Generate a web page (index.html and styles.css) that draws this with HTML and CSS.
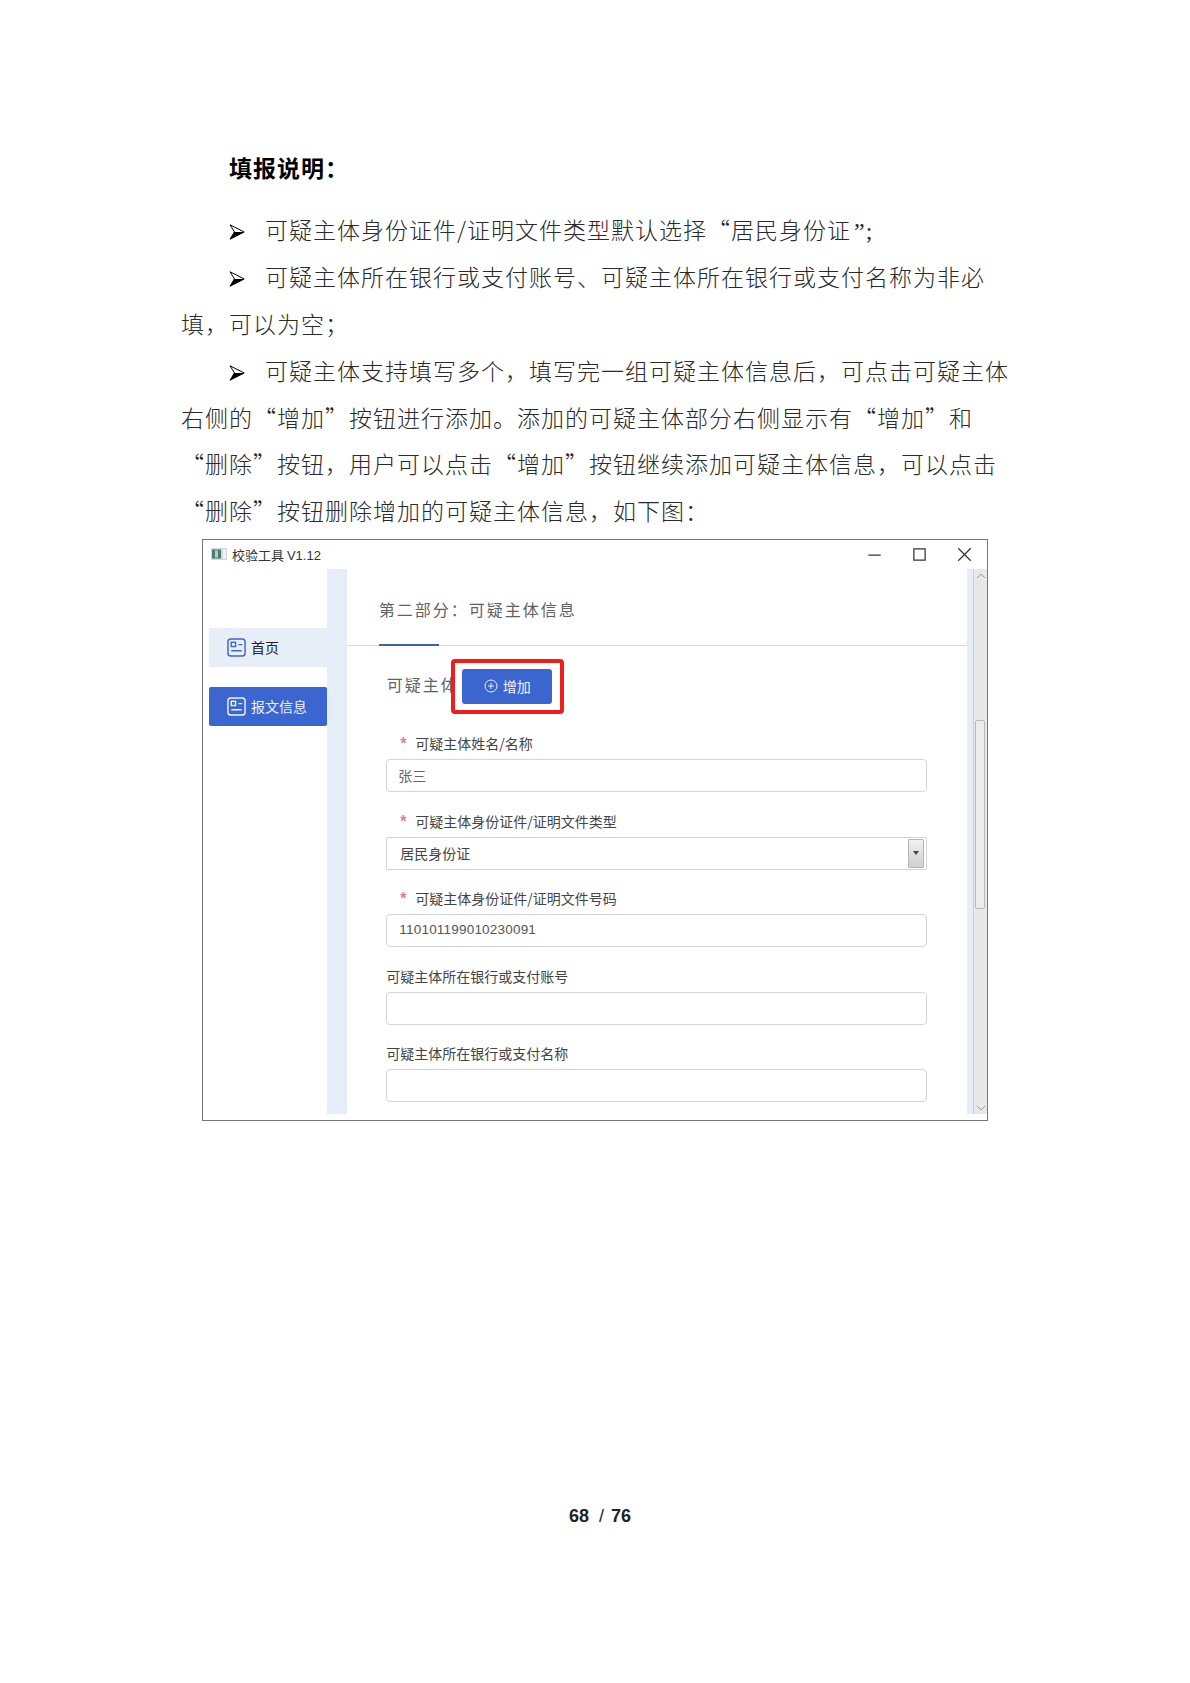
FILE: index.html
```html
<!DOCTYPE html>
<html lang="zh-CN">
<head>
<meta charset="utf-8">
<title>填报说明</title>
<link rel="stylesheet" href="styles.css">
</head>
<body>
<main class="page">
  <h1 class="heading">填报说明&#xFF1A;</h1>
  <p class="line item"><svg class="bullet" viewBox="0 0 16 16"><path class="b-line" d="M1 .8 L15.2 8 L1 15.2 L5.5 8 Z"/><path d="M5 8 H15.2 L1 15.2 Z"/></svg>可疑主体身份证件/证明文件类型默认选择“居民身份证<span class="tail">”;</span></p>
  <p class="line item"><svg class="bullet" viewBox="0 0 16 16"><path class="b-line" d="M1 .8 L15.2 8 L1 15.2 L5.5 8 Z"/><path d="M5 8 H15.2 L1 15.2 Z"/></svg>可疑主体所在银行或支付账号、可疑主体所在银行或支付名称为非必</p>
  <p class="line">填&#xFF0C;可以为空&#xFF1B;</p>
  <p class="line item"><svg class="bullet" viewBox="0 0 16 16"><path class="b-line" d="M1 .8 L15.2 8 L1 15.2 L5.5 8 Z"/><path d="M5 8 H15.2 L1 15.2 Z"/></svg>可疑主体支持填写多个&#xFF0C;填写完一组可疑主体信息后&#xFF0C;可点击可疑主体</p>
  <p class="line">右侧的“增加”按钮进行添加。添加的可疑主体部分右侧显示有“增加”和</p>
  <p class="line">“删除”按钮&#xFF0C;用户可以点击“增加”按钮继续添加可疑主体信息&#xFF0C;可以点击</p>
  <p class="line">“删除”按钮删除增加的可疑主体信息&#xFF0C;如下图&#xFF1A;</p>

  <section class="window">
    <header class="titlebar">
      <svg class="app-icon" viewBox="0 0 16 12"><rect width="16" height="12" fill="#d5d8d8"/><rect x="1" y="1.5" width="9" height="9" fill="#4d7a70"/><rect x="4" y="2.5" width="3" height="7" fill="#b9c9c5"/><rect x="12" y="1.5" width="3" height="9" fill="#f2f2f2"/></svg>
      <span class="app-title">校验工具 <span class="app-ver">V1.12</span></span>
      <div class="controls">
        <svg class="ctl" viewBox="0 0 12 12"><path d="M1 6.5H11"/></svg>
        <svg class="ctl" viewBox="0 0 12 12"><rect x="1.5" y="1.5" width="9" height="9"/></svg>
        <svg class="ctl" viewBox="0 0 12 12"><path d="M1 1L11 11M11 1L1 11"/></svg>
      </div>
    </header>
    <div class="win-body">
      <nav class="sidebar">
        <a class="nav-item nav-home"><svg class="nav-icon" viewBox="0 0 20 20"><rect x="1" y="1" width="18" height="18" rx="3"/><rect x="4.5" y="4.5" width="4.5" height="4.5"/><path d="M12 7H16M4.5 13.5H15.5"/></svg>首页</a>
        <a class="nav-item nav-active"><svg class="nav-icon" viewBox="0 0 20 20"><rect x="1" y="1" width="18" height="18" rx="3"/><rect x="4.5" y="4.5" width="4.5" height="4.5"/><path d="M12 7H16M4.5 13.5H15.5"/></svg>报文信息</a>
      </nav>
      <div class="strip"></div>
      <div class="content">
        <div class="tabs"><span class="tab">第二部分&#xFF1A;可疑主体信息</span></div>
        <div class="section-row">
          <span class="section-name">可疑主体</span>
          <div class="callout">
            <button class="add-btn"><svg class="plus" viewBox="0 0 14 14"><circle cx="7" cy="7" r="6"/><path d="M7 4V10M4 7H10"/></svg>增加</button>
          </div>
        </div>
        <form class="form">
          <div class="field">
            <label class="label req">可疑主体姓名/名称</label>
            <div class="input input-cjk">张三</div>
          </div>
          <div class="field">
            <label class="label req">可疑主体身份证件/证明文件类型</label>
            <div class="input select">居民身份证<span class="select-arrow"></span></div>
          </div>
          <div class="field">
            <label class="label req">可疑主体身份证件/证明文件号码</label>
            <div class="input input-num">110101199010230091</div>
          </div>
          <div class="field">
            <label class="label">可疑主体所在银行或支付账号</label>
            <div class="input"></div>
          </div>
          <div class="field">
            <label class="label">可疑主体所在银行或支付名称</label>
            <div class="input"></div>
          </div>
        </form>
      </div>
      <div class="strip-thin"></div>
      <div class="scrollbar">
        <svg class="sb-arrow" viewBox="0 0 10 6"><path d="M1 5L5 1L9 5"/></svg>
        <div class="thumb"></div>
        <svg class="sb-arrow sb-down" viewBox="0 0 10 6"><path d="M1 1L5 5L9 1"/></svg>
      </div>
    </div>
  </section>

  <footer class="pager"><b>68</b><span class="sep">/</span><b>76</b></footer>
</main>
</body>
</html>
```
FILE: styles.css
```css
* { box-sizing: border-box; }
html, body { margin: 0; padding: 0; background: #fff; }
body { font-family: "Noto Sans CJK SC", "Liberation Sans", sans-serif; color: #222; }
.page { width: 1190px; height: 1683px; padding: 144px 0 0 181px; }
.heading { margin: 0 0 15.7px; padding-left: 48px; font-size: 23px; letter-spacing: 1px; line-height: 46.8px; font-weight: 700; color: #000; }
.line { height: 46.8px; margin: 0; font-size: 23px; letter-spacing: 1px; line-height: 46.8px; white-space: nowrap; font-weight: 300; color: #2a2a2a; }
.item { padding-left: 48px; }
.bullet { display: inline-block; width: 16px; height: 16px; margin-right: 20px; vertical-align: -1px; fill: #000; }
.b-line { fill: #fff; stroke: #000; stroke-width: 1; }
.tail { font-family: "Liberation Serif", serif; font-size: 24px; line-height: 0; letter-spacing: 1px; margin-left: 3px; }

.window { width: 786px; height: 582px; margin: 4.6px 0 0 21px; border: 1.5px solid #777; background: #fff; }
.titlebar { height: 29px; display: flex; align-items: center; padding-left: 8px; }
.app-icon { width: 16px; height: 12px; margin-right: 5px; }
.app-title { font-size: 13px; color: #333; }
.app-ver { font-family: "Liberation Sans", sans-serif; }
.controls { margin-left: auto; display: flex; gap: 30px; padding-right: 15px; }
.ctl { width: 15px; height: 15px; fill: none; stroke: #333; stroke-width: 1; }

.win-body { display: flex; height: 545px; }
.sidebar { width: 124px; padding: 59px 0 0 6px; display: flex; flex-direction: column; gap: 20px; }
.nav-item { height: 39px; display: flex; align-items: center; padding-left: 18px; font-size: 14px; }
.nav-home { background: #e8eef8; color: #222; }
.nav-home .nav-icon { stroke: #3f66c9; }
.nav-active { background: #3c66cf; color: #eef2fb; border-radius: 2px; }
.nav-active .nav-icon { stroke: #eef2fb; }
.nav-icon { width: 19px; height: 19px; margin-right: 5px; fill: none; stroke-width: 1.5; }
.strip { width: 20px; background: #e7edf8; }
.strip-thin { width: 6px; background: #e7edf8; }

.content { width: 621px; }
.tabs { height: 77px; border-bottom: 1px solid #d8d8d8; display: flex; align-items: flex-end; padding-left: 32px; }
.tab { display: block; height: 77px; padding-top: 28px; width: 60px; white-space: nowrap; font-size: 16px; letter-spacing: 2px; line-height: 24px; color: #5f6266; border-bottom: 2px solid #3f5fb5; margin-bottom: -1px; }
.section-row { position: relative; height: 87.5px; padding: 26px 0 0 40px; }
.section-name { font-size: 16px; letter-spacing: 2px; line-height: 24px; color: #606266; }
.callout { position: absolute; left: 104px; top: 13px; width: 113px; height: 55px; background: #fff; border: 4px solid #ee1f1a; border-radius: 4px; display: flex; align-items: center; justify-content: center; }
.add-btn { width: 90px; height: 35px; border: 0; border-radius: 3px; background: #3c66cf; color: #f0f3fb; font: 14px "Noto Sans CJK SC", sans-serif; display: flex; align-items: center; justify-content: center; padding: 0; gap: 5px; }
.plus { width: 14px; height: 14px; fill: none; stroke: #e6ecf9; stroke-width: 1; }

.form { padding-left: 39.5px; display: flex; flex-direction: column; gap: 18.5px; }
.field { width: 541px; }
.label { display: block; height: 20px; margin-bottom: 6px; font-size: 14px; line-height: 20px; color: #444; }
.req { padding-left: 29px; position: relative; }
.req::before { content: "*"; position: absolute; left: 14px; top: 1px; color: #f4768c; font-family: "Liberation Sans", sans-serif; font-size: 16px; font-weight: 700; }
.input { height: 33px; border: 1.5px solid #d4d4d4; border-radius: 4px; font-size: 14px; line-height: 30px; color: #666; padding-left: 11px; background: #fff; }
.input-num { font-family: "Liberation Sans", sans-serif; font-size: 13.5px; letter-spacing: .2px; color: #555; padding-left: 12px; }
.select { position: relative; border-radius: 1px; color: #444; padding-left: 13px; }
.select-arrow { position: absolute; right: 2px; top: 1px; width: 16px; height: 29px; border: 1px solid #b5b5b5; border-radius: 1px; background: linear-gradient(#f1f1f1, #cfcfcf); display: flex; align-items: center; justify-content: center; }
.select-arrow::after { content: ""; border-left: 3.5px solid transparent; border-right: 3.5px solid transparent; border-top: 4px solid #444; }

.scrollbar { width: 14px; background: #e8e8e8; border-left: 1px solid #cfcfcf; display: flex; flex-direction: column; align-items: center; position: relative; }
.sb-arrow { width: 10px; height: 6px; margin-top: 4px; fill: none; stroke: #999; stroke-width: 1; flex: none; }
.sb-down { margin-top: auto; margin-bottom: 3px; }
.thumb { position: absolute; top: 151px; left: 1px; width: 10px; height: 189px; background: #ececec; border: 1px solid #b9b9b9; border-radius: 2px; }

.pager { margin: 383px 0 0 388px; font-family: "Liberation Sans", sans-serif; font-size: 18px; line-height: 24px; color: #222; }
.pager b { font-weight: 700; }
.sep { font-weight: 400; margin: 0 7px 0 10px; }
```
